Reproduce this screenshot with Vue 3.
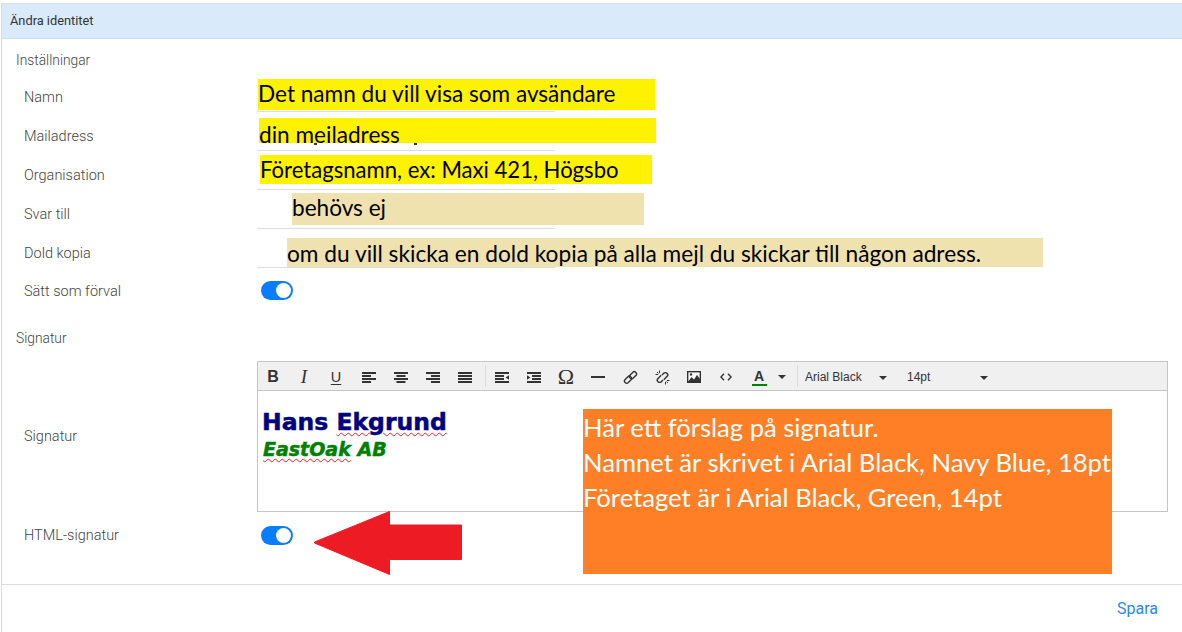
<script setup>
const inputs = ['Namn', 'Mailadress', 'Organisation', 'Svar till', 'Dold kopia']
const aligns = [
  [[0, 14], [0, 9], [0, 14], [0, 9]],
  [[0, 14], [2.5, 9], [0, 14], [2.5, 9]],
  [[0, 14], [5, 9], [0, 14], [5, 9]],
  [[0, 14], [0, 14], [0, 14], [0, 14]],
]
</script>

<template>
  <div class="page">
    <header class="head">Ändra identitet</header>
    <main class="body">
      <div class="section first">Inställningar</div>
      <div v-for="name in inputs" :key="name" class="row input-row">
        <label class="label">{{ name }}</label>
        <div class="field"></div>
      </div>
      <div class="row toggle-row">
        <label class="label">Sätt som förval</label>
        <span class="toggle"><i></i></span>
      </div>
      <div class="section second">Signatur</div>
      <div class="row editor-row">
        <label class="label">Signatur</label>
        <div class="editor">
          <div class="toolbar">
            <span class="tb b">B</span>
            <span class="tb i">I</span>
            <span class="tb u">U</span>
            <span v-for="(a, n) in aligns" :key="n" class="tb">
              <svg width="14" height="11" viewBox="0 0 14 11"><rect v-for="(l, k) in a" :key="k" :x="l[0]" :y="k * 3" :width="l[1]" height="2" fill="#333" /></svg>
            </span>
            <span class="sep"></span>
            <span class="tb">
              <svg width="14" height="11" viewBox="0 0 14 11" fill="#333"><rect width="14" height="2" /><rect y="3" width="9" height="2" /><rect y="6" width="9" height="2" /><rect y="9" width="14" height="2" /><path d="M14 3.200v4.600L10.600 5.500z" /></svg>
            </span>
            <span class="tb">
              <svg width="14" height="11" viewBox="0 0 14 11" fill="#333"><rect width="14" height="2" /><rect x="5" y="3" width="9" height="2" /><rect x="5" y="6" width="9" height="2" /><rect y="9" width="14" height="2" /><path d="M0 3.200v4.600L3.400 5.500z" /></svg>
            </span>
            <span class="tb omega">Ω</span>
            <span class="tb"><svg width="14" height="2" viewBox="0 0 14 2"><rect width="14" height="2" fill="#333" /></svg></span>
            <span class="tb">
              <svg width="15" height="15" viewBox="0 0 15 15" fill="none" stroke="#333" stroke-width="1.400"><rect x="1" y="7.500" width="8" height="4.500" rx="2.200" transform="rotate(-45 5 9.750)" /><rect x="6" y="3" width="8" height="4.500" rx="2.200" transform="rotate(-45 10 5.250)" /></svg>
            </span>
            <span class="tb">
              <svg width="15" height="15" viewBox="0 0 15 15" fill="none" stroke="#333" stroke-width="1.400"><path d="M6.200 5.200L3 8.400a2.300 2.300 0 0 0 3.300 3.300L8 10" /><path d="M8.800 9.800L12 6.600a2.300 2.300 0 0 0-3.300-3.300L7 5" /><path d="M4.500 .5v2.600M.5 4.500h2.600M10.500 14.500v-2.600M14.500 10.500h-2.600M2 2l1.500 1.500M13 13l-1.500-1.500" stroke-width="1" /></svg>
            </span>
            <span class="tb">
              <svg width="14" height="12" viewBox="0 0 14 12"><rect x=".7" y=".7" width="12.600" height="10.600" fill="#fff" stroke="#333" stroke-width="1.400" /><path d="M1 11l3.500-5 2.500 2.500L10 4l3 4v3.500H1z" fill="#333" /><circle cx="4" cy="3.500" r="1.200" fill="#333" /></svg>
            </span>
            <span class="tb">
              <svg width="12" height="8" viewBox="0 0 12 8" fill="none" stroke="#333" stroke-width="1.400"><path d="M4 .8L.9 4 4 7.200M8 .8L11.100 4 8 7.200" /></svg>
            </span>
            <span class="tb color">
              <span class="a">A</span>
            </span>
            <span class="caret color-caret"></span>
            <span class="sep sep2"></span>
            <span class="select font">Arial Black<span class="caret"></span></span>
            <span class="select size">14pt<span class="caret"></span></span>
          </div>
          <div class="content">
            <p class="sig-name">Hans <span class="typo">Ekgrund</span></p>
            <p class="sig-org"><span class="typo">EastOak</span> AB</p>
          </div>
        </div>
      </div>
      <div class="row toggle-row html-row">
        <label class="label">HTML-signatur</label>
        <span class="toggle"><i></i></span>
      </div>
    </main>
    <footer class="foot"><a class="save">Spara</a></footer>

    <div class="note y1">Det namn du vill visa som avsändare</div>
    <div class="note y2">din mejladress</div>
    <i class="speck s1"></i>
    <i class="speck s2"></i>
    <div class="note y3">Företagsnamn, ex: Maxi 421, Högsbo</div>
    <div class="note t1">behövs ej</div>
    <div class="note t2">om du vill skicka en dold kopia på alla mejl du skickar till någon adress.</div>
    <div class="note orange">Här ett förslag på signatur.<br />Namnet är skrivet i Arial Black, Navy Blue, 18pt<br />Företaget är i Arial Black, Green, 14pt</div>
    <svg class="arrow" width="150" height="65" viewBox="0 0 150 65"><path d="M1.500 31L76.500.5V14H148.500V48.500H76.500V63.500L1.500 32z" fill="#ed1c24" stroke="#ed1c24" stroke-width="1" stroke-linejoin="round" /></svg>
  </div>
</template>

<style>
html, body { background: #fff; }
</style>

<style scoped>
.page {
  position: relative;
  box-sizing: border-box;
  width: 1182px;
  height: 632px;
  overflow: hidden;
  padding-top: 3px;
  font-family: Roboto, "Liberation Sans", sans-serif;
  color: #555;
  background: #fff;
}
.head {
  box-sizing: border-box;
  height: 36px;
  margin-left: 1px;
  padding-left: 8px;
  line-height: 33px;
  font-size: 12.800px;
  color: #333;
  background: #d9ebfb;
  border-top: 1px solid #dcdcdc;
  border-left: 1px solid #dcdcdc;
  border-bottom: 1px solid #c9dff0;
}
.body {
  box-sizing: border-box;
  height: 545px;
  margin-left: 1px;
  border-left: 1px solid #dcdcdc;
}
.section {
  padding-left: 14px;
  line-height: 20px;
  font-size: 13.800px;
  font-weight: 300;
  color: #444;
}
.section.first { padding-top: 11px; padding-bottom: 3px; }
.section.second { padding-top: 15px; padding-bottom: 13px; }
.row {
  display: flex;
  align-items: center;
  height: 39px;
}
.label {
  box-sizing: border-box;
  flex: 0 0 255px;
  padding-left: 22px;
  font-size: 14.500px;
  font-weight: 300;
  color: #444;
}
.input-row .label { padding-top: 10px; }
.toggle-row .label { padding-top: 2px; }
.html-row .label { padding-top: 0; }
.field {
  box-sizing: border-box;
  width: 298px;
  height: 39px;
  border-bottom: 1px solid #ddd;
}
.toggle-row { height: 45px; }
.html-row { height: 46px; }
.toggle {
  position: relative;
  box-sizing: border-box;
  display: block;
  width: 32px;
  height: 19px;
  margin-left: 4px;
  border-radius: 10px;
  background: #0a7cff;
}
.toggle i {
  position: absolute;
  top: 2px;
  right: 2px;
  width: 15px;
  height: 15px;
  border-radius: 50%;
  background: #fff;
}
.editor-row { height: 151px; }
.editor {
  box-sizing: border-box;
  width: 911px;
  height: 151px;
  border: 1px solid #c5c5c5;
  font-family: "Liberation Sans", sans-serif;
}
.toolbar {
  position: relative;
  display: flex;
  align-items: center;
  box-sizing: border-box;
  height: 29px;
  padding-top: 2px;
  background: #f0f0f0;
  border-bottom: 1px solid #c5c5c5;
}
.tb {
  display: flex;
  flex: 0 0 32px;
  align-items: center;
  justify-content: center;
  width: 32px;
  height: 26px;
  color: #333;
}
.tb:first-child { margin-left: -1px; }
.b { font-size: 16px; font-weight: 700; margin-left: -2px; }
.i { font-family: "Liberation Serif", serif; font-size: 19px; font-style: italic; margin-left: -1px; }
.u { font-size: 14.500px; text-decoration: underline; text-underline-offset: 2px; margin-right: 1px; }
.omega { font-family: "Liberation Serif", serif; font-size: 22px; }
.sep {
  flex: 0 0 1px;
  height: 22px;
  margin-top: -2px;
  margin-left: 4px;
  background: #d9d9d9;
}
.a {
  display: block;
  width: 15px;
  box-sizing: border-box;
  text-align: center;
  font-size: 14px;
  font-weight: 700;
  line-height: 15px;
  border-bottom: 2px solid #008000;
}
.color { margin-left: 1px; }
.caret {
  display: inline-block;
  width: 0;
  height: 0;
  border-left: 4px solid transparent;
  border-right: 4px solid transparent;
  border-top: 4px solid #333;
}
.color-caret { margin-left: 3px; }
.sep2 { margin-left: 11px; }
.select {
  position: relative;
  font-size: 12px;
  color: #333;
}
.font { margin-left: 7px; width: 102px; }
.size { width: 81px; }
.select .caret {
  position: absolute;
  top: 6px;
  right: 16px;
}
.font .caret { right: 20px; }
.size .caret { right: 0; }
.content {
  padding: 17px 5px 0;
  background: #fff;
}
.content p {
  margin: 0;
  white-space: nowrap;
  font-family: "DejaVu Sans", sans-serif;
  font-weight: 700;
  -webkit-text-stroke: .5px currentColor;
}
.sig-name {
  font-size: 23.500px;
  line-height: 29px;
  color: navy;
  margin-left: -1px !important;
}
.sig-org {
  font-size: 19px;
  line-height: 25px;
  font-style: italic;
  color: green;
}
.typo {
  text-decoration: underline wavy #e22;
  text-decoration-thickness: 1px;
  text-underline-offset: 2px;
}
.foot {
  box-sizing: border-box;
  display: flex;
  align-items: center;
  justify-content: flex-end;
  height: 48px;
  margin-left: 1px;
  padding-right: 24px;
  border-left: 1px solid #dcdcdc;
  border-top: 1px solid #ddd;
}
.save { font-size: 16px; color: #2b88f0; }
.note {
  position: absolute;
  box-sizing: border-box;
  overflow: hidden;
  white-space: nowrap;
  font-family: Lato, "Liberation Sans", sans-serif;
  font-size: 22.600px;
  color: #000;
}
.speck {
  position: absolute;
  top: 143px;
  width: 3px;
  height: 2px;
  background: #333;
}
.s1 { left: 314px; }
.s2 { left: 414px; }
.y1 { left: 258px; top: 79px; width: 397px; height: 31px; line-height: 30px; background: #fff200; }
.y2 { left: 259px; top: 118px; width: 397px; height: 25px; line-height: 33px; background: #fff200; }
.y3 { left: 260px; top: 155px; width: 392px; height: 29px; line-height: 30px; font-size: 22.100px; background: #fff200; }
.t1 { left: 292px; top: 193px; width: 352px; height: 32px; line-height: 29px; background: #efe2ae; }
.t2 { left: 287px; top: 238px; width: 756px; height: 29px; line-height: 31px; font-size: 22.700px; background: #efe2ae; }
.orange {
  left: 583px;
  top: 409px;
  width: 529px;
  height: 165px;
  padding-top: 1px;
  font-size: 25.600px;
  line-height: 35px;
  color: #fff;
  background: #ff7f27;
}
.arrow { position: absolute; left: 313px; top: 511px; }
</style>
